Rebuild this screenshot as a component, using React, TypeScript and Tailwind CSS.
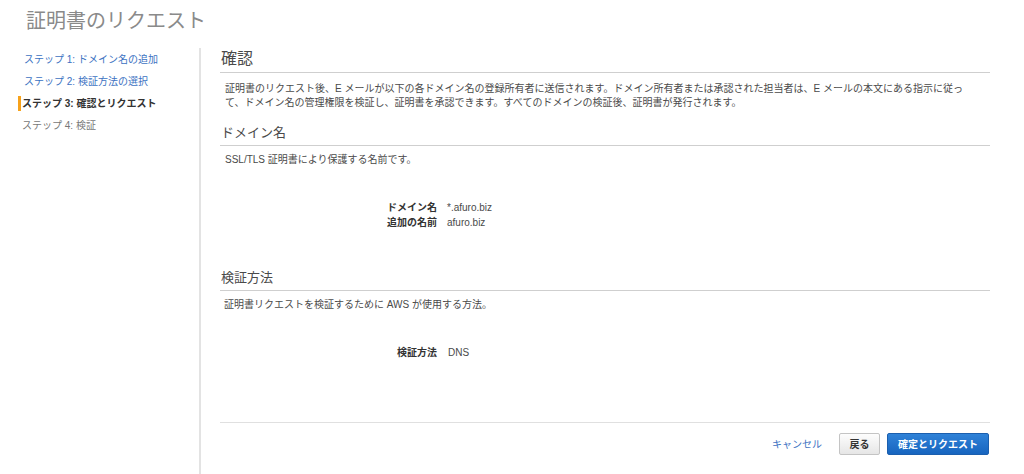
import React from "react";

const font = { fontFamily: '"Liberation Sans", "Noto Sans CJK JP", sans-serif' };

export default function App() {
  return (
    <div className="w-[1024px] h-[474px] bg-white overflow-hidden text-[#4a4a4a]" style={font}>
      <div className="pt-[8px] pl-[26px] mb-[14px]">
        <h1 className="text-[20px] leading-[26px] text-[#8a8a8a] font-normal">証明書のリクエスト</h1>
      </div>
      <div className="flex h-[426px]">
        <nav className="w-[201px] shrink-0 border-r-2 border-[#e3e3e3]">
          <ul className="pl-[18px] text-[10px]">
            <li className="h-[22px] flex items-center pl-[6px] text-[#3c72c2]">ステップ 1: ドメイン名の追加</li>
            <li className="h-[22px] flex items-center pl-[6px] text-[#3c72c2]">ステップ 2: 検証方法の選択</li>
            <li className="h-[22px] flex items-center">
              <span className="border-l-[3px] border-[#f7a21b] pl-[1px] font-bold text-[#333] leading-[15px]">ステップ 3: 確認とリクエスト</span>
            </li>
            <li className="h-[22px] flex items-center pl-[4px] text-[#777]">ステップ 4: 検証</li>
          </ul>
        </nav>
        <main className="pl-[19px] w-[789px]">
          <h2 className="text-[16px] leading-[22px] pb-[2px] pl-[1px] font-normal border-b border-[#cfcfcf]">確認</h2>
          <p className="mt-[9px] pl-[5px] text-[10px] leading-[14px]">
            証明書のリクエスト後、E メールが以下の各ドメイン名の登録所有者に送信されます。ドメイン所有者または承認された担当者は、E メールの本文にある指示に従っ
            <br />
            て、ドメイン名の管理権限を検証し、証明書を承認できます。すべてのドメインの検証後、証明書が発行されます。
          </p>

          <h3 className="mt-[14px] text-[13px] leading-[18px] pb-[3px] pl-[1px] font-normal border-b border-[#cfcfcf]">ドメイン名</h3>
          <p className="mt-[7px] pl-[5px] text-[10px] leading-[14px]">SSL/TLS 証明書により保護する名前です。</p>
          <div className="mt-[33px] grid grid-cols-[217px_1fr] gap-x-[10px] text-[10px] leading-[15px]">
            <div className="text-right font-bold text-[#333]">ドメイン名</div>
            <div>*.afuro.biz</div>
            <div className="text-right font-bold text-[#333]">追加の名前</div>
            <div>afuro.biz</div>
          </div>

          <h3 className="mt-[39px] text-[13px] leading-[18px] pb-[3px] pl-[1px] font-normal border-b border-[#cfcfcf]">検証方法</h3>
          <p className="mt-[7px] pl-[4px] text-[10px] leading-[14px]">証明書リクエストを検証するために AWS が使用する方法。</p>
          <div className="mt-[34px] grid grid-cols-[217px_1fr] gap-x-[11px] text-[10px] leading-[14px]">
            <div className="text-right font-bold text-[#333]">検証方法</div>
            <div>DNS</div>
          </div>

          <div className="mt-[62px] border-t border-[#e0e0e0] w-[770px]" />
          <div className="mt-[10px] w-[769px] flex justify-end items-center text-[10px]">
            <span className="text-[#3c72c2] mr-[17px]">キャンセル</span>
            <button className="h-[22px] w-[41px] rounded-[2px] border border-[#c4c4c4] bg-gradient-to-b from-[#fdfdfd] to-[#e6e6e6] font-bold text-[#333] mr-[7px]">戻る</button>
            <button className="h-[22px] w-[102px] rounded-[2px] border border-[#1b5fae] bg-gradient-to-b from-[#2f82d8] to-[#1765bf] font-bold text-white">確定とリクエスト</button>
          </div>
        </main>
      </div>
    </div>
  );
}
